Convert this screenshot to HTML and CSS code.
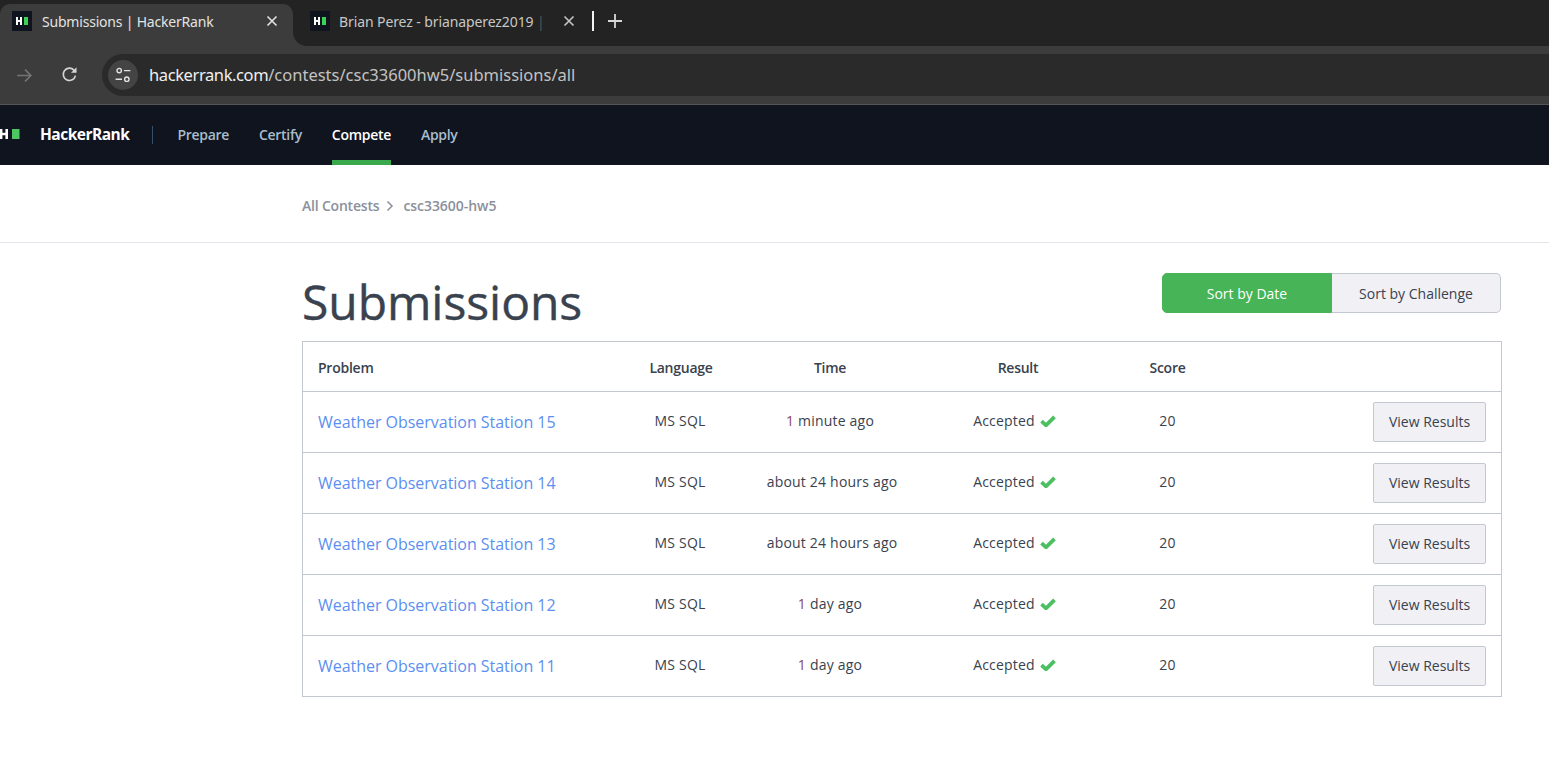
FILE: index.html
```html
<!DOCTYPE html>
<html lang="en">
<head>
<meta charset="utf-8">
<title>Submissions | HackerRank</title>
<link rel="stylesheet" href="styles.css">
</head>
<body>
<div class="chrome">
  <div class="tabstrip">
    <div class="tab tab-active">
      <svg class="favicon" viewBox="0 0 20 20"><rect width="20" height="20" fill="#0f141e"/><path d="M4 6h2v3h2V6h2v8H8v-3H6v3H4z" fill="#fff"/><rect x="12" y="6" width="4" height="8" fill="#39d353"/></svg>
      <span class="tab-title">Submissions | HackerRank</span>
      <svg class="tab-close" viewBox="0 0 12 12"><path d="M1.5 1.5l9 9M10.5 1.5l-9 9" stroke="#e3e3e3" stroke-width="1.6" fill="none"/></svg>
    </div>
    <div class="tab-rest-wrap">
      <div class="tab-rest">
        <div class="tab tab-idle">
          <svg class="favicon" viewBox="0 0 20 20"><rect width="20" height="20" fill="#0f141e"/><path d="M4 6h2v3h2V6h2v8H8v-3H6v3H4z" fill="#fff"/><rect x="12" y="6" width="4" height="8" fill="#39d353"/></svg>
          <span class="tab-title tab-title-idle">Brian Perez - brianaperez2019 <span class="tab-fade">|</span></span>
          <svg class="tab-close" viewBox="0 0 12 12"><path d="M1.5 1.5l9 9M10.5 1.5l-9 9" stroke="#c7c7c7" stroke-width="1.6" fill="none"/></svg>
        </div>
        <span class="tab-sep"></span>
        <svg class="tab-new" viewBox="0 0 14 14"><path d="M7 0v14M0 7h14" stroke="#d8d8d8" stroke-width="1.8" fill="none"/></svg>
      </div>
    </div>
  </div>
  <div class="toolbar">
    <svg class="tool-forward" viewBox="0 0 16 16"><path d="M1 8h13M8.5 2.5L14 8l-5.500 5.500" stroke="#747474" stroke-width="1.5" fill="none"/></svg>
    <svg class="tool-reload" viewBox="0 0 16 16"><path d="M13.6 9a5.8 5.8 0 1 1-1.4-5.1L14 5.6" stroke="#d5d5d5" stroke-width="1.5" fill="none"/><path d="M14.6 1.2v5.200H9.400z" fill="#d5d5d5"/></svg>
    <div class="omnibox">
      <span class="site-chip">
        <svg class="site-icon" viewBox="0 0 16 16"><circle cx="4.2" cy="3.6" r="2.2" stroke="#e3e3e3" stroke-width="1.4" fill="none"/><path d="M9 3.6h6.4M.6 12.2H7" stroke="#e3e3e3" stroke-width="1.4" fill="none"/><circle cx="11.8" cy="12.2" r="2.2" stroke="#e3e3e3" stroke-width="1.4" fill="none"/></svg>
      </span>
      <span class="url"><span class="url-host">hackerrank.com</span>/contests/csc33600hw5/submissions/all</span>
    </div>
  </div>
</div>
<nav class="nav">
  <svg class="nav-logo" viewBox="0 0 20 12"><path d="M0 1h2.400v3.800h3V1H8v10H5.400V7.200h-3V11H0z" fill="#fff"/><rect x="12" y="1" width="7.500" height="10" fill="#4cc761"/></svg>
  <span class="brand">HackerRank</span>
  <span class="nav-sep"></span>
  <a class="nav-link">Prepare</a>
  <a class="nav-link">Certify</a>
  <a class="nav-link nav-link-active">Compete</a>
  <a class="nav-link">Apply</a>
</nav>
<div class="crumbs">
  <div class="crumbs-inner">
    <span>All Contests</span>
    <svg class="crumb-arrow" viewBox="0 0 8 12"><path d="M1.500 1.500L6 6l-4.500 4.500" stroke="#8c909b" stroke-width="1.500" fill="none"/></svg>
    <span class="crumb-now">csc33600-hw5</span>
  </div>
</div>
<main class="content">
  <header class="head">
    <h1 class="title">Submissions</h1>
    <div class="sorter">
      <button class="sort sort-on">Sort by Date</button>
      <button class="sort sort-off">Sort by Challenge</button>
    </div>
  </header>
  <section class="table">
    <div class="row row-head">
      <div class="c-problem">Problem</div><div class="c-mid c-lang-h">Language</div><div class="c-mid c-time-h">Time</div><div class="c-mid">Result</div><div class="c-mid">Score</div><div></div>
    </div>
    <div class="row">
      <a class="c-problem link">Weather Observation Station 15</a><div class="c-mid">MS SQL</div><div class="c-mid c-short"><span class="num">1</span> minute ago</div>
      <div class="c-mid c-res">Accepted <svg class="check" viewBox="0 0 16 12"><path d="M1.500 6.200L6 10.300L14.500 1.800" stroke="#4cbf62" stroke-width="3.800" fill="none"/></svg></div>
      <div class="c-mid">20</div><div class="c-act"><button class="view">View Results</button></div>
    </div>
    <div class="row">
      <a class="c-problem link">Weather Observation Station 14</a><div class="c-mid">MS SQL</div><div class="c-mid">about 24 hours ago</div>
      <div class="c-mid c-res">Accepted <svg class="check" viewBox="0 0 16 12"><path d="M1.500 6.200L6 10.300L14.500 1.800" stroke="#4cbf62" stroke-width="3.800" fill="none"/></svg></div>
      <div class="c-mid">20</div><div class="c-act"><button class="view">View Results</button></div>
    </div>
    <div class="row">
      <a class="c-problem link">Weather Observation Station 13</a><div class="c-mid">MS SQL</div><div class="c-mid">about 24 hours ago</div>
      <div class="c-mid c-res">Accepted <svg class="check" viewBox="0 0 16 12"><path d="M1.500 6.200L6 10.300L14.500 1.800" stroke="#4cbf62" stroke-width="3.800" fill="none"/></svg></div>
      <div class="c-mid">20</div><div class="c-act"><button class="view">View Results</button></div>
    </div>
    <div class="row">
      <a class="c-problem link">Weather Observation Station 12</a><div class="c-mid">MS SQL</div><div class="c-mid c-short"><span class="num">1</span> day ago</div>
      <div class="c-mid c-res">Accepted <svg class="check" viewBox="0 0 16 12"><path d="M1.500 6.200L6 10.300L14.500 1.800" stroke="#4cbf62" stroke-width="3.800" fill="none"/></svg></div>
      <div class="c-mid">20</div><div class="c-act"><button class="view">View Results</button></div>
    </div>
    <div class="row">
      <a class="c-problem link">Weather Observation Station 11</a><div class="c-mid">MS SQL</div><div class="c-mid c-short"><span class="num">1</span> day ago</div>
      <div class="c-mid c-res">Accepted <svg class="check" viewBox="0 0 16 12"><path d="M1.500 6.200L6 10.300L14.500 1.800" stroke="#4cbf62" stroke-width="3.800" fill="none"/></svg></div>
      <div class="c-mid">20</div><div class="c-act"><button class="view">View Results</button></div>
    </div>
  </section>
</main>
</body>
</html>
```
FILE: styles.css
```css
* { box-sizing: border-box; }
html, body { margin: 0; padding: 0; background: #fff; overflow: hidden; }
body { font-family: "Open Sans", "Noto Sans", sans-serif; color: #39424e; }

/* browser chrome */
.chrome { background: #3c3c3c; height: 105px; border-bottom: 1px solid #555; font-family: "Noto Sans", "Open Sans", sans-serif; }
.tabstrip { display: flex; height: 46px; background: #232323; }
.tab { display: flex; align-items: center; }
.tab-active { width: 293px; margin-top: 4px; padding: 0 0 8px 12px; background: #3c3c3c; border-radius: 10px 10px 0 0; }
.tab-rest-wrap { flex: 1; background: #3c3c3c; }
.tab-rest { display: flex; align-items: center; height: 46px; padding-bottom: 4px; background: #232323; border-bottom-left-radius: 14px; padding-left: 17px; }
.tab-idle { width: 300px; }
.favicon { width: 20px; height: 20px; flex: none; }
.tab-title { margin-left: 10px; font-size: 14px; color: #e3e3e3; white-space: nowrap; width: 224px; overflow: hidden; letter-spacing: -0.2px; }
.tab-title-idle { margin-left: 9px; letter-spacing: -0.1px; color: #c7c7c7; width: 217px; }
.tab-fade { color: #555; }
.tab-close { width: 12px; height: 12px; flex: none; }
.tab-idle .tab-close { margin-left: 7px; }
.tab-sep { width: 2px; height: 20px; background: #f2f2f2; margin-left: -18px; }
.tab-new { width: 14px; height: 14px; margin-left: 14px; }
.toolbar { display: flex; align-items: center; height: 58px; padding-left: 16px; }
.tool-forward { width: 17px; height: 17px; flex: none; margin-top: 1px; }
.tool-reload { width: 17px; height: 17px; flex: none; margin-left: 28px; margin-top: -2px; }
.omnibox { flex: 1; display: flex; align-items: center; height: 42px; margin-left: 24px; margin-top: -1px; padding-left: 6px; background: #2a2a2a; border-radius: 21px 0 0 21px; }
.site-chip { display: flex; align-items: center; justify-content: center; width: 30px; height: 30px; border-radius: 50%; background: #444; }
.site-icon { width: 16px; height: 16px; }
.url { margin-left: 11px; font-size: 16.500px; color: #c2c2c2; white-space: nowrap; letter-spacing: 0; }
.url-host { color: #f0f0f0; letter-spacing: -0.4px; }

/* site nav */
.nav { display: flex; align-items: center; height: 60px; background: #0f141e; position: relative; }
.nav-logo { width: 20px; height: 12px; flex: none; margin-top: -2px; }
.brand { margin-left: 20px; font-size: 15.500px; font-weight: 700; color: #fff; letter-spacing: -0.5px; margin-top: -2px; }
.nav-sep { width: 1px; height: 18px; background: #39506a; margin-left: 23px; }
.nav-link { display: flex; align-items: center; height: 60px; margin-left: 29px; padding-bottom: 2px; font-size: 14px; font-weight: 600; color: #a8bdcb; letter-spacing: -0.3px; border-bottom: 5px solid transparent; border-top: 5px solid transparent; }
.nav-link + .nav-link { margin-left: 30px; }
.nav-sep + .nav-link { margin-left: 24px; }
.nav-link-active { color: #fff; border-bottom-color: #39a94b; }

/* breadcrumb */
.crumbs { height: 78px; border-bottom: 1px solid #e3e5ea; padding-left: 302px; display: flex; align-items: center; }
.crumbs-inner { display: flex; align-items: center; font-size: 14px; font-weight: 600; color: #8c909b; letter-spacing: -0.2px; margin-top: 4px; }
.crumb-arrow { width: 8px; height: 12px; margin: 0 9px 0 7px; }
.crumb-now { letter-spacing: -0.05px; }

/* content */
.content { width: 1200px; margin-left: 302px; padding-top: 30px; }
.head { display: flex; justify-content: space-between; align-items: flex-start; height: 68px; }
.title { margin: 0; font-size: 48px; font-weight: 500; line-height: 58px; letter-spacing: -0.05px; color: #39424e; -webkit-text-stroke: 0.4px #39424e; }
.sorter { display: flex; margin-right: 1px; height: 40px; }
.sort { height: 40px; font-family: inherit; font-size: 14px; padding: 0; border: 1px solid #c2c7d0; }
.sort-on { width: 170px; background: #46b457; border-color: #46b457; color: #fff; border-radius: 5px 0 0 5px; }
.sort-off { width: 169px; background: #f0f0f5; color: #39424e; border-left: 0; border-radius: 0 5px 5px 0; }

.table { border: 1px solid #c2c7d0; border-bottom: 0; }
.row { display: grid; grid-template-columns: 327px 100px 204px 168px 131px 1fr; align-items: center; height: 61px; border-bottom: 1px solid #c2c7d0; font-size: 14px; color: #39424e; }
.row > .c-mid { letter-spacing: 0.2px; padding-bottom: 3px; }
.row > .c-short { padding-right: 4px; }
.num { color: #8a4a55; }
.row-head { height: 50px; letter-spacing: -0.25px; }
.row-head > div { font-weight: 600; }
.row-head > .c-mid { letter-spacing: -0.25px; padding-bottom: 0; padding-top: 2px; }
.row-head > .c-problem { padding-top: 2px; }
.row-head > .c-lang-h { padding-left: 2px; }
.c-problem { padding-left: 15px; }
.c-mid { text-align: center; }
.row-head > .c-time-h { padding-right: 4px; }
.row > .c-res { padding-right: 7px; display: flex; align-items: center; justify-content: center; gap: 5px; }
.link { color: #5c8ff0; font-size: 16px; letter-spacing: -0.03px; }
.check { width: 16px; height: 12px; }
.c-act { display: flex; justify-content: flex-end; padding-right: 15px; }
.view { width: 113px; height: 40px; padding: 0 0 2px; font-family: inherit; font-size: 14px; color: #39424e; background: #f0f0f5; border: 1px solid #c2c7d0; border-radius: 2px; }
```
